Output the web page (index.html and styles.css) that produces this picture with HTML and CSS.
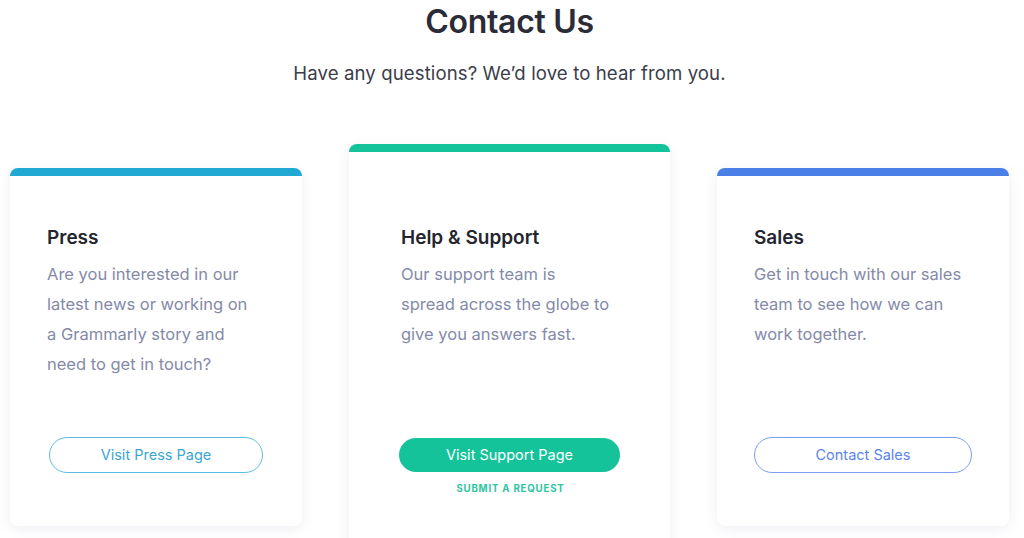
FILE: index.html
```
<!doctype html>
<html><head><meta charset="utf-8"/><meta name="viewport" content="width=device-width, initial-scale=1"/>
<link rel="stylesheet" href="styles.css">
<title>Contact Us</title>
</head>
<body>
	<header class="intro">
		<h1>Contact Us</h1>
		<p>Have any questions? We’d love to hear from you.</p>
	</header>

	<section class="cards">

		<div class="card press">
			<h3>Press</h3>
			<p>Are you interested in our latest news or working on a Grammarly story and need to get in touch?</p>
			<a class="btn" href="#">Visit Press Page</a>
		</div>

		<div class="card support">
			<h3>Help &amp; Support</h3>
			<p>Our support team is spread across the globe to give you answers fast.</p>
			<a class="btn" href="#">Visit Support Page</a>
			<a class="small-link" href="#">SUBMIT A REQUEST</a>
		</div>

		<div class="card sales">
			<h3>Sales</h3>
			<p>Get in touch with our sales team to see how we can work together.</p>
			<a class="btn" href="#">Contact Sales</a>
		</div>

	</section>
</body>
</html>
```
FILE: styles.css
```
* { box-sizing: border-box; }
body { margin: 0; font-family: "Inter", "Liberation Sans", sans-serif; background: #fff; color: #2b2c38; overflow: hidden; }

.intro { text-align: center; padding: 1px 5px 0 0; }
.intro h1 { font-size: 32px; font-weight: 600; line-height: 40px; margin: 1px 0 0 0; letter-spacing: -0.3px; }
.intro p { font-size: 18.6px; line-height: 24px; margin: 19px 0 0 0; color: #3b3d4a; letter-spacing: 0.1px; }

.cards { display: flex; align-items: flex-start; gap: 47px; padding: 0 15px 0 10px; margin-top: 59px; }

.card { background: #fff; border-radius: 8px; border-top: 8px solid #21a8d3; box-shadow: 0 3px 14px rgba(40, 50, 100, 0.08);
	width: 292px; height: 358px; margin-top: 24px; padding: 50px 37px 0 37px; display: flex; flex-direction: column; align-items: flex-start; }
.card h3 { font-size: 19px; font-weight: 600; line-height: 24px; margin: 0; color: #24252f; }
.card p { font-size: 16.5px; line-height: 30px; margin: 9px 0 0 0; color: #848aa8; min-height: 178px; max-width: 210px; }

.btn { display: block; height: 36px; line-height: 34px; border-radius: 18px; border: 1px solid #5cbbe0; text-align: center;
	font-size: 14.5px; text-decoration: none; color: #3aa6d4; margin-left: 2px; }

.press .btn { width: 214px; }

.support { width: 321px; height: 420px; margin-top: 0; border-top-color: #15c39a; padding: 74px 52px 0 52px; }
.support p { min-height: 179px; }
.support .btn { width: 221px; height: 34px; line-height: 34px; border: none; background: #15c39a; color: #fff; margin-left: -2px; }
.small-link { align-self: center; margin-top: 11px; font-size: 9.7px; font-weight: 700; letter-spacing: 0.8px; color: #2fc59f; text-decoration: none; margin-left: 2px; }

.sales { border-top-color: #4a7fe8; }
.sales .btn { width: 218px; border-color: #7b9cf0; color: #5a83ec; margin-left: 0; }
```
